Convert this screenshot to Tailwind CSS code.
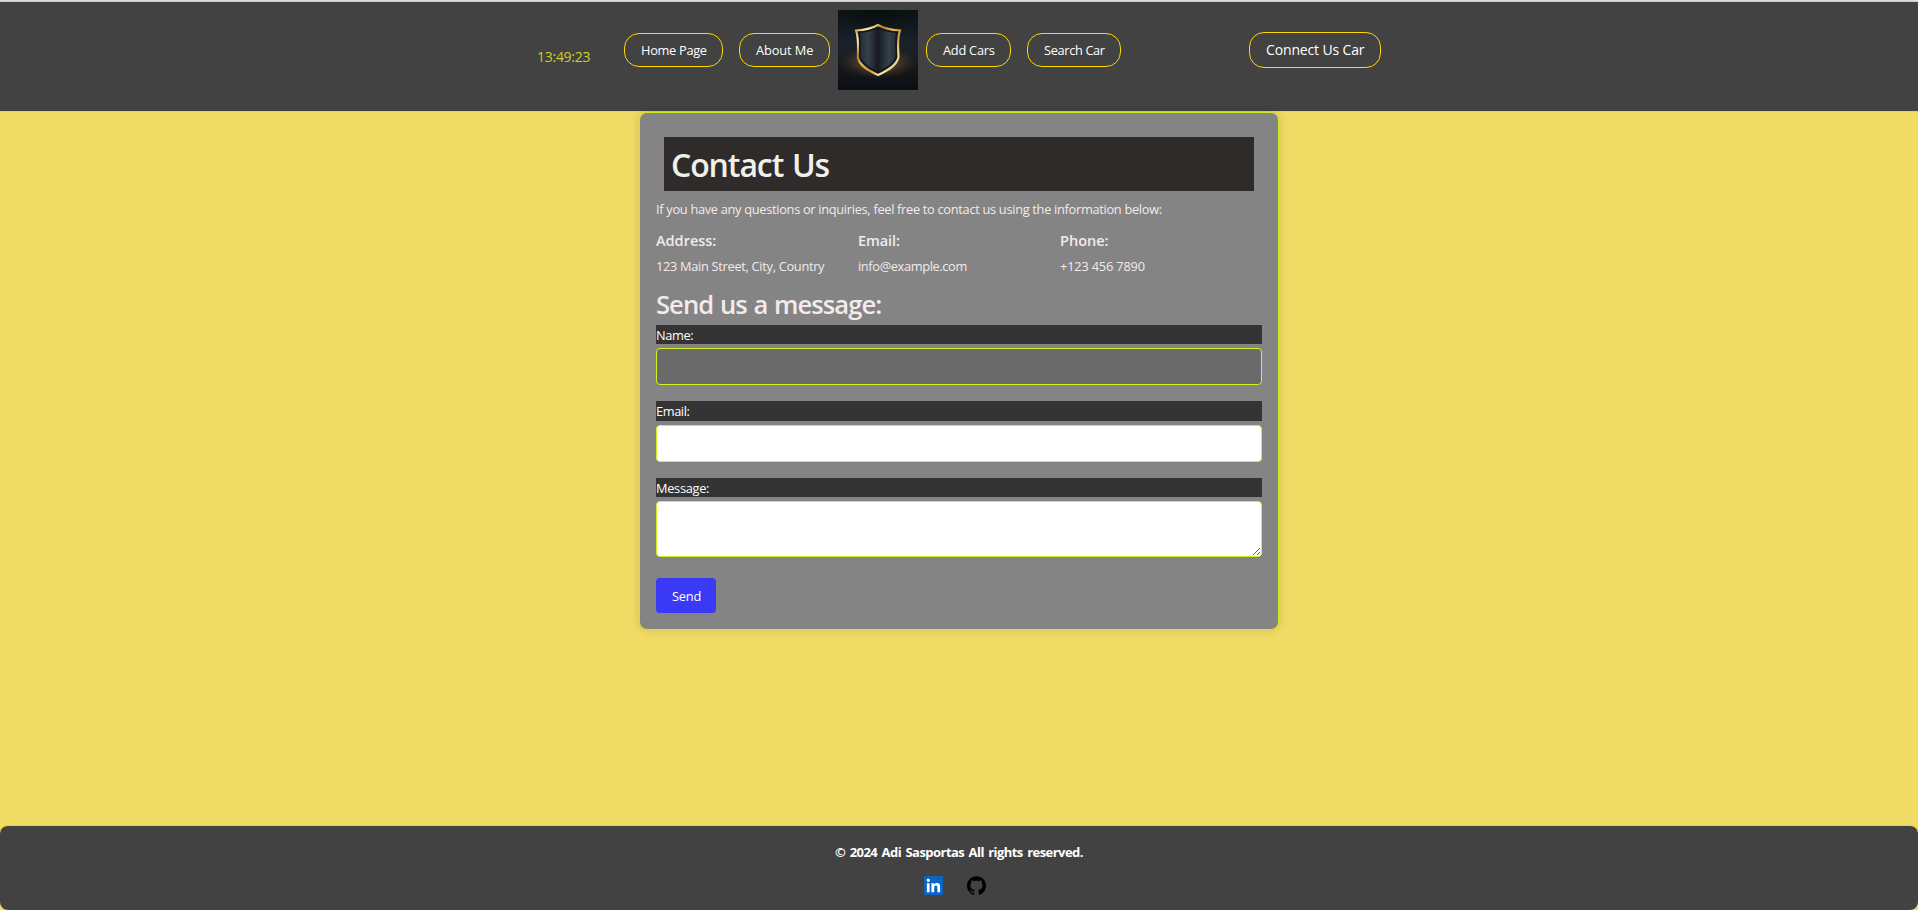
<!DOCTYPE html>
<html lang="en">
<head>
<meta charset="utf-8">
<title>Contact Us</title>
<script src="https://cdn.jsdelivr.net/npm/@tailwindcss/browser@4"></script>
</head>
<body class="flex h-[910px] flex-col overflow-hidden bg-[#f0dc64] font-['Open_Sans','Noto_Sans',sans-serif] text-[12.8px] leading-[19px]">
<div class="h-px shrink-0 bg-[#dedede]"></div>
<header class="flex h-[111px] shrink-0 items-start border-y border-[#ffd700] bg-[#424242] pl-[537px] text-white">
  <time class="mt-[45px] w-[87px] text-sm leading-5 tracking-[-0.27px] whitespace-nowrap text-[#d0d022]">13:49:23</time>
  <nav class="flex items-start whitespace-nowrap">
    <a class="mt-[31px] flex h-[34px] w-[99px] items-center rounded-[15px] border border-[#ffd700] pl-4 tracking-[-0.3px]">Home Page</a>
    <a class="mt-[31px] ml-4 flex h-[34px] w-[91px] items-center rounded-[15px] border border-[#ffd700] pl-4 tracking-[-0.1px]">About Me</a>
    <svg class="mt-2 ml-2 h-20 w-20" viewBox="0 0 80 80">
      <defs>
        <linearGradient id="bg" x1="0" y1="0" x2="0" y2="1"><stop offset="0" stop-color="#0c1114"/><stop offset=".45" stop-color="#1b222b"/><stop offset=".7" stop-color="#16191c"/><stop offset="1" stop-color="#0b0e12"/></linearGradient>
        <radialGradient id="top" cx=".5" cy="0" r=".5"><stop offset="0" stop-color="#090e10"/><stop offset="1" stop-color="#090e10" stop-opacity="0"/></radialGradient>
        <radialGradient id="glow"><stop offset="0" stop-color="#6b4a2c" stop-opacity=".8"/><stop offset=".55" stop-color="#5c4430" stop-opacity=".6"/><stop offset="1" stop-color="#3a2a1d" stop-opacity="0"/></radialGradient>
        <linearGradient id="steel"><stop offset="0" stop-color="#20272f"/><stop offset=".28" stop-color="#35404a"/><stop offset=".49" stop-color="#161a22"/><stop offset=".53" stop-color="#1a2028"/><stop offset=".75" stop-color="#35414b"/><stop offset="1" stop-color="#1d242b"/></linearGradient>
        <linearGradient id="gold" x1="0" y1="0" x2="1" y2="1"><stop offset="0" stop-color="#c58e2d"/><stop offset=".17" stop-color="#fff2b4"/><stop offset=".32" stop-color="#b87d20"/><stop offset=".45" stop-color="#e3b856"/><stop offset=".6" stop-color="#cf9a36"/><stop offset=".78" stop-color="#ffeaa0"/><stop offset="1" stop-color="#b57b24"/></linearGradient>
      </defs>
      <path fill="url(#bg)" d="M0 0h80v80H0z"/>
      <path fill="url(#top)" d="M0 0h80v40H0z"/>
      <ellipse cx="40" cy="52" rx="40" ry="17" fill="url(#glow)"/>
      <path d="M40 15C35 18 26 20 18 20.500C21 29 20 38 19.800 47C21 55 29 60 40 65C51 60 59 55 60.500 47C60 38 59 29 62 20.500C54 20 45 18 40 15Z" fill="url(#steel)" stroke="url(#gold)" stroke-width="2.100"/>
      <path d="M40 17.500C35 20 28 21.800 21 22.300C23 30 22 38 21.800 46.500C23 53 30 58 40 62.500C50 58 57 53 58.500 46.500C58 38 57 30 59 22.300C52 21.800 45 20 40 17.500Z" fill="none" stroke="#12161b" stroke-width="1.500"/>
    </svg>
    <a class="mt-[31px] ml-2 flex h-[34px] w-[85px] items-center rounded-[15px] border border-[#ffd700] pl-4 tracking-[-0.25px]">Add Cars</a>
    <a class="mt-[31px] ml-4 flex h-[34px] w-[94px] items-center rounded-[15px] border border-[#ffd700] pl-4 tracking-[-0.35px]">Search Car</a>
  </nav>
  <a class="mt-[30px] ml-32 flex h-9 w-[132px] items-center rounded-[15px] border border-[#ffd700] pl-4 text-sm tracking-[-0.15px] whitespace-nowrap">Connect Us Car</a>
</header>

<main class="flex-1">
  <section class="mx-auto flex h-[518px] w-[640px] flex-col rounded-lg border border-[#d4e822] bg-[#848484] px-4 text-[#f2ebeb] shadow-[0_0_10px_rgba(0,0,0,0.15)]">
    <h1 class="mx-2 mt-6 h-[54px] shrink-0 bg-[#302b2b] pl-[7px] text-[32px] leading-[56px] font-semibold tracking-[-1.1px] [word-spacing:1.5px] text-[#f0f0eb]">Contact Us</h1>
    <p class="mt-[9px] tracking-[-0.3px] whitespace-nowrap">If you have any questions or inquiries, feel free to contact us using the information below:</p>
    <div class="mt-[13px] grid grid-cols-3 whitespace-nowrap">
      <div>
        <h2 class="text-[14.5px] leading-[18px] font-semibold">Address:</h2>
        <p class="mt-[7px] tracking-[-0.3px]">123 Main Street, City, Country</p>
      </div>
      <div>
        <h2 class="text-[14.5px] leading-[18px] font-semibold tracking-[-0.1px]">Email:</h2>
        <p class="mt-[7px] tracking-[-0.36px]">info@example.com</p>
      </div>
      <div>
        <h2 class="text-[14.5px] leading-[18px] font-semibold">Phone:</h2>
        <p class="mt-[7px] tracking-[-0.18px]">+123 456 7890</p>
      </div>
    </div>
    <h2 class="mt-[13px] text-[25.6px] leading-[31px] font-semibold tracking-[-0.95px] [word-spacing:1px]">Send us a message:</h2>
    <form class="mt-[5px] flex flex-col items-stretch">
      <label class="h-[19px] bg-[#343434] leading-5 tracking-[-0.4px] text-white" for="name">Name:</label>
      <input id="name" class="mt-1 h-[37px] rounded-[4px] border border-[#d4f01e] bg-[#6a6a6a] px-2 outline-none">
      <label class="mt-4 h-5 bg-[#343434] leading-5 tracking-[-0.4px] text-white" for="email">Email:</label>
      <input id="email" class="mt-1 h-[37px] rounded-[4px] border border-[#d4f01e] bg-white px-2 outline-none">
      <label class="mt-4 h-[19px] bg-[#343434] leading-5 tracking-[-0.3px] text-white" for="message">Message:</label>
      <textarea id="message" class="mt-1 h-14 resize rounded-[4px] border border-[#d4f01e] bg-white px-2 outline-none"></textarea>
      <button type="button" class="mt-[21px] flex h-[35px] w-[60px] items-center rounded-[4px] bg-[#3a3af6] pt-0.5 pl-4 tracking-[-0.2px] text-white">Send</button>
    </form>
  </section>
</main>

<footer class="flex h-[85px] shrink-0 flex-col items-center rounded-lg border-t border-[#ffd700] bg-[#424242]">
  <p class="mt-[17px] text-[13px] font-bold tracking-[-0.54px] [word-spacing:1.5px] whitespace-nowrap text-white">© 2024 Adi Sasportas All rights reserved.</p>
  <div class="mt-[14px] mr-[9px] flex gap-6">
    <svg class="h-[19px] w-[19px]" viewBox="0 0 24 24"><rect x="3" y="3" width="18" height="20" fill="#fff"/><path fill="#0a66c2" d="M20.447 20.452h-3.554v-5.569c0-1.328-.027-3.037-1.852-3.037-1.853 0-2.136 1.445-2.136 2.939v5.667H9.351V9h3.414v1.561h.046c.477-.9 1.637-1.850 3.370-1.850 3.601 0 4.267 2.370 4.267 5.455v6.286zM5.337 7.433a2.062 2.062 0 1 1 0-4.125 2.062 2.062 0 0 1 0 4.125zM7.119 20.452H3.555V9h3.564zM22.225 0H1.771C.792 0 0 .774 0 1.729v20.542C0 23.227.792 24 1.771 24h20.451C23.200 24 24 23.227 24 22.271V1.729C24 .774 23.200 0 22.222 0z"/></svg>
    <svg class="h-[19px] w-[19px]" viewBox="0 0 24 24"><path d="M12 .297c-6.630 0-12 5.373-12 12 0 5.303 3.438 9.800 8.205 11.385.6.113.82-.258.82-.577 0-.285-.01-1.040-.015-2.040-3.338.724-4.042-1.610-4.042-1.610C4.422 18.070 3.633 17.700 3.633 17.700c-1.087-.744.084-.729.084-.729 1.205.084 1.838 1.236 1.838 1.236 1.070 1.835 2.809 1.305 3.495.998.108-.776.417-1.305.76-1.605-2.665-.3-5.466-1.332-5.466-5.930 0-1.310.465-2.380 1.235-3.220-.135-.303-.54-1.523.105-3.176 0 0 1.005-.322 3.300 1.230.96-.267 1.980-.399 3-.405 1.020.006 2.040.138 3 .405 2.280-1.552 3.285-1.230 3.285-1.230.645 1.653.24 2.873.12 3.176.765.84 1.230 1.910 1.230 3.220 0 4.610-2.805 5.625-5.475 5.920.42.360.81 1.096.81 2.220 0 1.606-.015 2.896-.015 3.286 0 .315.210.69.825.57C20.565 22.092 24 17.592 24 12.297c0-6.627-5.373-12-12-12"/></svg>
  </div>
</footer>
</body>
</html>
